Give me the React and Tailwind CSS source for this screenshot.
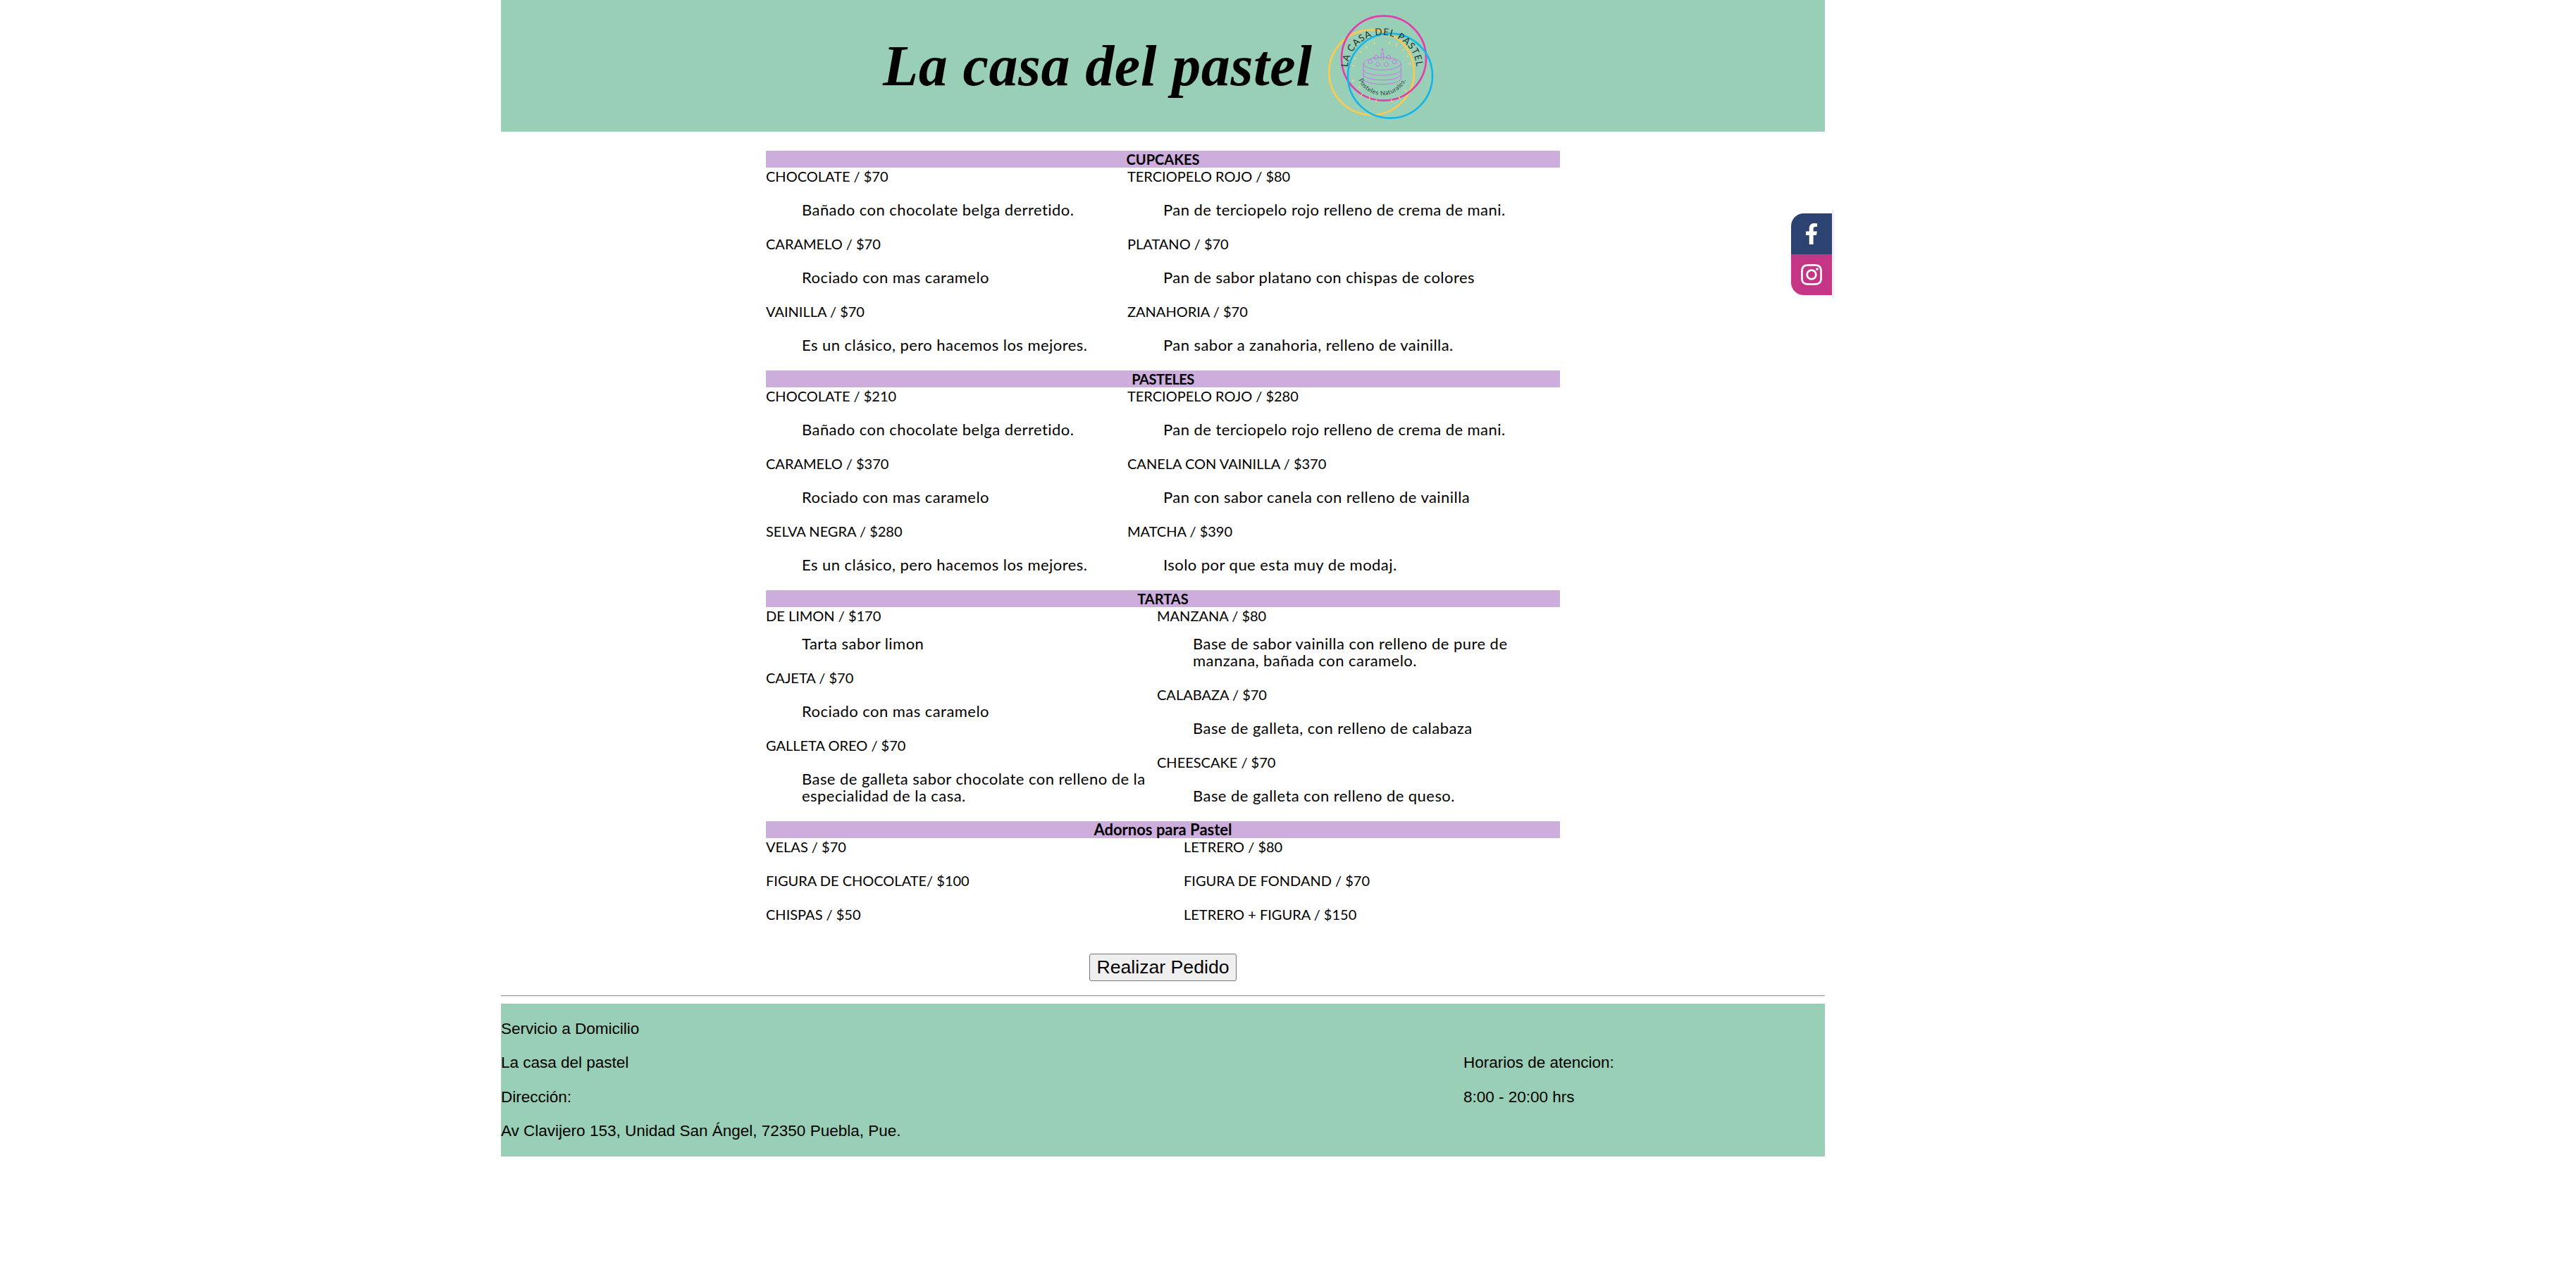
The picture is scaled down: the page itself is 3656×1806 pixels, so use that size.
import React from 'react';
import { FaFacebookF, FaInstagram } from 'react-icons/fa';

const menu = [
  {
    title: 'CUPCAKES',
    cols: 'grid-cols-[513px_1fr]',
    left: [
      ['CHOCOLATE / $70', 'Bañado con chocolate belga derretido.'],
      ['CARAMELO / $70', 'Rociado con mas caramelo'],
      ['VAINILLA / $70', 'Es un clásico, pero hacemos los mejores.'],
    ],
    right: [
      ['TERCIOPELO ROJO / $80', 'Pan de terciopelo rojo relleno de crema de mani.'],
      ['PLATANO / $70', 'Pan de sabor platano con chispas de colores'],
      ['ZANAHORIA / $70', 'Pan sabor a zanahoria, relleno de vainilla.'],
    ],
  },
  {
    title: 'PASTELES',
    titleClass: 'tracking-[-0.5px]',
    cols: 'grid-cols-[513px_1fr]',
    left: [
      ['CHOCOLATE / $210', 'Bañado con chocolate belga derretido.'],
      ['CARAMELO / $370', 'Rociado con mas caramelo'],
      ['SELVA NEGRA / $280', 'Es un clásico, pero hacemos los mejores.'],
    ],
    right: [
      ['TERCIOPELO ROJO / $280', 'Pan de terciopelo rojo relleno de crema de mani.'],
      ['CANELA CON VAINILLA / $370', 'Pan con sabor canela con relleno de vainilla'],
      ['MATCHA / $390', 'Isolo por que esta muy de modaj.'],
    ],
  },
  {
    title: 'TARTAS',
    cols: 'grid-cols-[555px_1fr]',
    tight: true,
    left: [
      ['DE LIMON / $170', 'Tarta sabor limon'],
      ['CAJETA / $70', 'Rociado con mas caramelo'],
      ['GALLETA OREO / $70', 'Base de galleta sabor chocolate con relleno de la especialidad de la casa.'],
    ],
    right: [
      ['MANZANA / $80', 'Base de sabor vainilla con relleno de pure de manzana, bañada con caramelo.'],
      ['CALABAZA / $70', 'Base de galleta, con relleno de calabaza'],
      ['CHEESCAKE / $70', 'Base de galleta con relleno de queso.'],
    ],
  },
  {
    title: 'Adornos para Pastel',
    titleClass: 'text-[22px]',
    cols: 'grid-cols-[593px_1fr]',
    left: [['VELAS / $70'], ['FIGURA DE CHOCOLATE/ $100'], ['CHISPAS / $50']],
    right: [['LETRERO / $80'], ['FIGURA DE FONDAND / $70'], ['LETRERO + FIGURA / $150']],
  },
];

const rays = [
  [300, 147], [265, 165], [238, 187], [367, 145], [400, 153], [430, 177], [448, 205],
  [458, 240], [215, 215], [205, 247], [205, 315], [232, 345], [243, 378], [278, 395],
  [308, 405], [377, 405], [412, 390], [440, 360],
];

const Logo = () => (
  <svg viewBox="90 20 480 471" className="w-[160px] h-[157px] mt-[3px] ml-[16px] shrink-0" fill="none">
    <circle cx="290" cy="277" r="181" stroke="#fdc94f" strokeWidth="8" />
    <circle cx="342" cy="217" r="180" stroke="#e23fae" strokeWidth="8" />
    <circle cx="369" cy="292" r="180" stroke="#14b6ea" strokeWidth="8" />
    {rays.map(([x, y]) => {
      const dx = (335 - x) * 0.09;
      const dy = (265 - y) * 0.09;
      return (
        <line key={`${x}-${y}`} x1={x} y1={y} x2={x + dx} y2={y + dy} stroke="#fdd663" strokeWidth="4" />
      );
    })}
    <g stroke="#cc70ee" strokeWidth="3">
      <ellipse cx="335" cy="240" rx="80" ry="27" />
      <path d="M255 240v62c0 15 36 26 80 26s80-11 80-26v-62" />
      <path d="M255 264c0 15 36 26 80 26s80-11 80-26M255 284c0 15 36 26 80 26s80-11 80-26" />
      <path d="M331 225v-30h10v30M336 174c-5 6-5 12 0 14c5-2 5-8 0-14z" />
      <path d="M276 236c0-7 5-13 8-15c4 2 9 8 9 15c0 5-17 5-17 0z" />
      <path d="M308 246c0-7 5-12 9-14c4 2 9 7 9 14c0 6-18 6-18 0z" />
      <path d="M343 246c0-7 5-12 9-14c4 2 9 7 9 14c0 6-18 6-18 0z" />
      <path d="M378 236c0-7 5-13 9-15c4 2 9 8 9 15c0 5-18 5-18 0z" />
      <path d="M300 217c0-7 5-12 10-14c5 2 10 7 10 14c0 5-20 5-20 0z" />
      <path d="M352 217c0-7 5-12 10-14c5 2 10 7 10 14c0 5-20 5-20 0z" />
    </g>
    <defs>
      <path id="logo-top" d="M188 265A147 147 0 1 1 482 265" />
      <path id="logo-bottom" d="M225 265A110 110 0 0 0 445 265" />
    </defs>
    <text fill="#22302c" fontSize="40" letterSpacing="3" fontFamily="Lato, sans-serif" textAnchor="middle">
      <textPath href="#logo-top" startOffset="50%">LA CASA DEL PASTEL</textPath>
    </text>
    <text fill="#2f4a42" fontSize="27" letterSpacing="1.5" fontFamily="Lato, sans-serif" textAnchor="middle">
      <textPath href="#logo-bottom" startOffset="50%">Posteles Naturales.</textPath>
    </text>
  </svg>
);

const Column = ({ items, tight }) => (
  <div>
    {items.map(([name, desc], i) => (
      <div key={name}>
        <p className="mb-6">{name}</p>
        {desc && (
          <p className={`mb-6 pl-[51px] text-[22px] tracking-[0.45px] ${tight && i === 0 ? '-mt-2' : ''}`}>{desc}</p>
        )}
      </div>
    ))}
  </div>
);

const App = () => {
  return (
    <div className="relative min-h-[1806px] bg-white text-black font-['Liberation_Sans',sans-serif]">
      <div className="w-[1879px] ml-[711px]">
        <header className="h-[187px] bg-[#98cfb6] flex items-center pl-[542px]">
          <h1 className="w-[611px] shrink-0 text-[82px] leading-none font-bold italic whitespace-nowrap font-['Liberation_Serif',serif] tracking-[0.6px]">
            La casa del pastel
          </h1>
          <Logo />
        </header>

        <main className="w-[1127px] mx-auto pt-[27px] text-[20px] leading-6 font-['Lato',sans-serif]">
          {menu.map((section) => (
            <section key={section.title}>
              <h2 className={`h-6 bg-[#cdaddc] text-center font-bold ${section.titleClass || ''}`}>{section.title}</h2>
              <div className={`grid ${section.cols}`}>
                <Column items={section.left} tight={section.tight} />
                <Column items={section.right} tight={section.tight} />
              </div>
            </section>
          ))}
          <div className="flex justify-center pt-[20px]">
            <button className="w-[209px] h-[39px] bg-[#efefef] border border-[#767676] rounded-[3px] text-[26.67px] leading-none font-['Liberation_Sans',sans-serif]">
              Realizar Pedido
            </button>
          </div>
        </main>

        <hr className="mt-[20px] border-t border-b-2 border-t-[#9a9a9a] border-b-[#f0f0f0]" />

        <footer className="mt-[9px] bg-[#98cfb6] py-6 flex justify-between items-center text-[22.5px] leading-6">
          <div className="flex flex-col gap-[24.33px]">
            <p>Servicio a Domicilio</p>
            <p>La casa del pastel</p>
            <p>Dirección:</p>
            <p>Av Clavijero 153, Unidad San Ángel, 72350 Puebla, Pue.</p>
          </div>
          <div className="w-[513px] flex flex-col gap-[24.33px]">
            <p>Horarios de atencion:</p>
            <p>8:00 - 20:00 hrs</p>
          </div>
        </footer>
      </div>

      {/* redes sociales */}
      <div className="absolute left-[2542px] top-[298px] border-r-[3px] border-[#eeeeee] py-[5px]">
        <a className="w-[58px] h-[58px] flex items-center justify-center bg-[#2c4270] text-white rounded-tl-[18px]">
          <FaFacebookF className="w-[30px] h-[30px]" />
        </a>
        <a className="w-[58px] h-[58px] flex items-center justify-center bg-[#c43585] text-white rounded-bl-[18px]">
          <FaInstagram className="w-[34px] h-[34px]" />
        </a>
      </div>
    </div>
  );
};

export default App;
